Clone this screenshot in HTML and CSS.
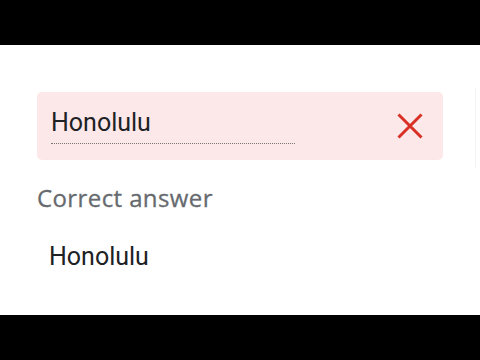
FILE: index.html
```html
<!DOCTYPE html>
<html lang="en">
<head>
  <meta charset="UTF-8" />
  <title>Quiz answer</title>
  <link rel="stylesheet" href="styles.css">
</head>
<body>
  <div class="bar"></div>

  <main class="content">
    <div class="answer-row">
      <div class="answer wrong">
        <div class="field">Honolulu</div>
        <svg class="mark" width="26" height="26" viewBox="0 0 26 26" aria-hidden="true">
          <path d="M1.5 1.5 L24.5 24.5 M24.5 1.5 L1.5 24.5" stroke="#d93025" stroke-width="3" fill="none" />
        </svg>
      </div>
      <div class="edge"></div>
    </div>

    <p class="label">Correct answer</p>
    <p class="correct">Honolulu</p>
  </main>

  <div class="bar"></div>
</body>
</html>
```

FILE: styles.css
```css
body {
  margin: 0;
  background: #000;
  font-family: Roboto, "Liberation Sans", Arial, sans-serif;
  color: #202124;
}

.bar {
  height: 45px;
  background: #000;
}

.content {
  background: #fff;
  height: 270px;
  box-sizing: border-box;
  padding: 47px 0 0 37px;
}

.answer-row {
  display: flex;
}

.answer {
  width: 406px;
  height: 68px;
  box-sizing: border-box;
  padding: 0 20px 0 14px;
  border-radius: 5px;
  display: flex;
  align-items: center;
  justify-content: space-between;
}

.answer.wrong {
  background: #fde8e9;
}

.field {
  width: 244px;
  font-size: 25px;
  line-height: 30px;
  padding-bottom: 5px;
  border-bottom: 1px dotted #777;
}

.mark {
  display: block;
}

/* faint edge of the neighbouring card */
.edge {
  width: 1px;
  height: 80px;
  margin: -4px 4px -8px auto;
  background: #f4f4f4;
}

.label {
  margin: 24px 0 0;
  font-family: "Open Sans", Roboto, sans-serif;
  font-size: 24px;
  line-height: 28px;
  letter-spacing: 0.4px;
  color: #666a6e;
  -webkit-text-stroke: 0.3px #666a6e;
}

.correct {
  margin: 30px 0 0 12px;
  font-size: 25px;
  line-height: 30px;
}
```
